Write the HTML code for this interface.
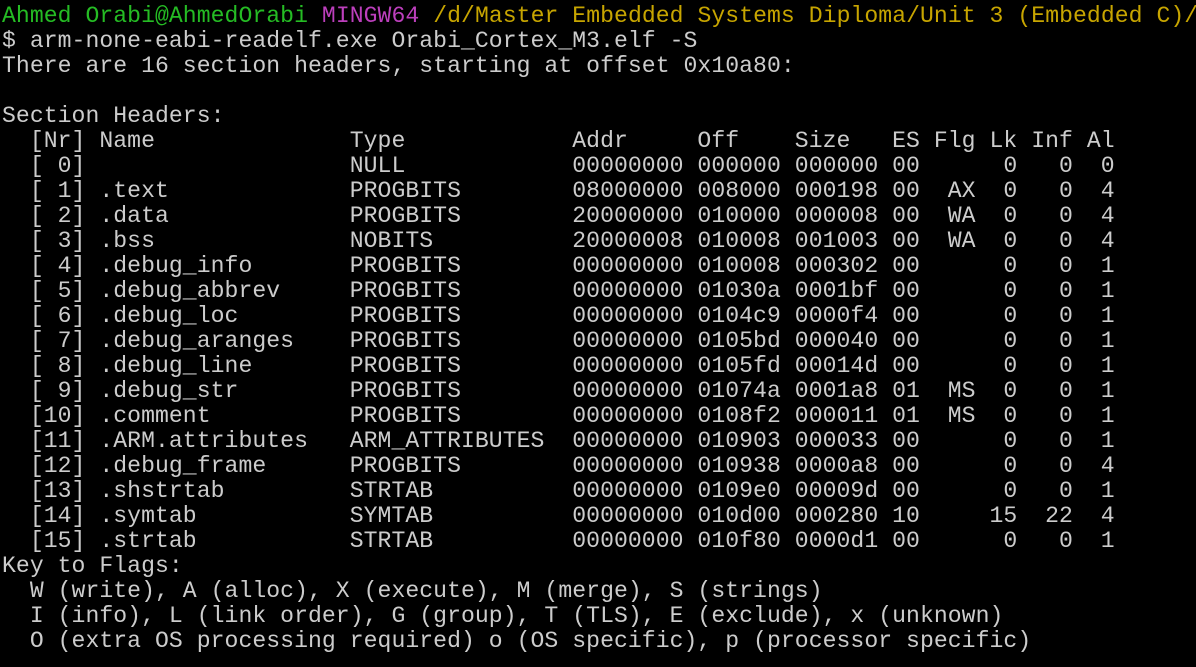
<!DOCTYPE html>
<html><head><meta charset="utf-8"><style>
html,body{margin:0;padding:0;background:#000;width:1196px;height:667px;overflow:hidden}
pre{margin:0;position:absolute;left:2px;top:4px;font-family:"Liberation Mono",monospace;font-size:23.1px;letter-spacing:0.05px;line-height:25px;color:#cccccc;white-space:pre}
.g{color:#25bc24}.m{color:#bc3fbc}.y{color:#c7a500}
</style></head><body><pre><span class="g">Ahmed Orabi@AhmedOrabi</span> <span class="m">MINGW64</span> <span class="y">/d/Master Embedded Systems Diploma/Unit 3 (Embedded C)/</span>
$ arm-none-eabi-readelf.exe Orabi_Cortex_M3.elf -S
There are 16 section headers, starting at offset 0x10a80:

Section Headers:
  [Nr] Name              Type            Addr     Off    Size   ES Flg Lk Inf Al
  [ 0]                   NULL            00000000 000000 000000 00      0   0  0
  [ 1] .text             PROGBITS        08000000 008000 000198 00  AX  0   0  4
  [ 2] .data             PROGBITS        20000000 010000 000008 00  WA  0   0  4
  [ 3] .bss              NOBITS          20000008 010008 001003 00  WA  0   0  4
  [ 4] .debug_info       PROGBITS        00000000 010008 000302 00      0   0  1
  [ 5] .debug_abbrev     PROGBITS        00000000 01030a 0001bf 00      0   0  1
  [ 6] .debug_loc        PROGBITS        00000000 0104c9 0000f4 00      0   0  1
  [ 7] .debug_aranges    PROGBITS        00000000 0105bd 000040 00      0   0  1
  [ 8] .debug_line       PROGBITS        00000000 0105fd 00014d 00      0   0  1
  [ 9] .debug_str        PROGBITS        00000000 01074a 0001a8 01  MS  0   0  1
  [10] .comment          PROGBITS        00000000 0108f2 000011 01  MS  0   0  1
  [11] .ARM.attributes   ARM_ATTRIBUTES  00000000 010903 000033 00      0   0  1
  [12] .debug_frame      PROGBITS        00000000 010938 0000a8 00      0   0  4
  [13] .shstrtab         STRTAB          00000000 0109e0 00009d 00      0   0  1
  [14] .symtab           SYMTAB          00000000 010d00 000280 10     15  22  4
  [15] .strtab           STRTAB          00000000 010f80 0000d1 00      0   0  1
Key to Flags:
  W (write), A (alloc), X (execute), M (merge), S (strings)
  I (info), L (link order), G (group), T (TLS), E (exclude), x (unknown)
  O (extra OS processing required) o (OS specific), p (processor specific)</pre></body></html>
